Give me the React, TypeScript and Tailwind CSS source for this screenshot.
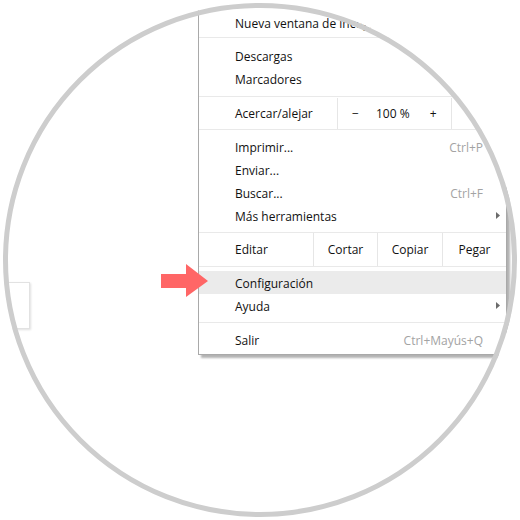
import React from "react";

const font = { fontFamily: '"Segoe UI", "Open Sans", "Noto Sans", sans-serif' };

function Row({ label, shortcut, sub, active }: { label: string; shortcut?: string; sub?: boolean; active?: boolean }) {
  return (
    <div className={`relative flex h-[23px] items-center pl-[36px] pr-[23px] ${active ? "bg-[#ebebeb]" : ""}`}>
      <span className="relative top-[1px] flex-1 text-[12px] text-[#111]">{label}</span>
      {shortcut && <span className="relative top-[1px] text-[12px] text-[#a3a3a3]">{shortcut}</span>}
      {sub && (
        <svg className="absolute left-[297px] top-[8px]" width="4" height="7" viewBox="0 0 4 7">
          <polygon points="0,0 4,3.5 0,7" fill="#6b6b6b" />
        </svg>
      )}
    </div>
  );
}

function Sep() {
  return <div className="h-px bg-[#e9e9e9]" />;
}

export default function App() {
  return (
    <div className="relative h-[520px] w-[520px] overflow-hidden bg-white" style={font}>
      {/* page element behind menu */}
      <div className="absolute left-0 top-[282px] h-[47px] w-[30px] border border-[#e2e2e2] bg-white shadow-[1px_1px_2px_rgba(0,0,0,0.12)]" />
      <div className="absolute left-[512px] top-[238px] h-[28px] w-px bg-[#3b9be0]" />

      {/* Chrome menu */}
      <div className="absolute left-[198px] top-0 w-[309px] border-x border-b border-[#a9a9a9] bg-white shadow-[3px_3px_2px_rgba(0,0,0,0.3)]">
        <div className="pb-[3px] pt-[11px]">
          <Row label="Nueva ventana de incógnito" shortcut="Ctrl+Mayús+N" />
        </div>
        <Sep />
        <div className="py-[6px]">
          <Row label="Descargas" shortcut="Ctrl+J" />
          <Row label="Marcadores" sub />
        </div>
        <Sep />
        <div className="flex h-[32px] pt-[1px] text-[12px] text-[#111]">
          <div className="flex w-[138px] items-center pl-[36px]">Acercar/alejar</div>
          <div className="flex w-[115px] items-center border-x border-[#e6e6e6]">
            <span className="ml-[14px] w-[6px] text-center">−</span>
            <span className="ml-[18px]">100 %</span>
            <span className="ml-[20px]">+</span>
          </div>
          <div className="flex-1" />
        </div>
        <Sep />
        <div className="py-[5px]">
          <Row label="Imprimir..." shortcut="Ctrl+P" />
          <Row label="Enviar..." />
          <Row label="Buscar..." shortcut="Ctrl+F" />
          <Row label="Más herramientas" sub />
        </div>
        <Sep />
        <div className="flex h-[33px] text-[12px] text-[#111]">
          <div className="flex w-[114px] items-center pl-[36px] pt-[1px]">Editar</div>
          <div className="flex w-[64px] items-center justify-center border-l border-[#e6e6e6] pt-[1px]">Cortar</div>
          <div className="flex w-[65px] items-center justify-center border-l border-[#e6e6e6] pt-[1px]">Copiar</div>
          <div className="flex flex-1 items-center justify-center border-l border-[#e6e6e6] pt-[1px]">Pegar</div>
        </div>
        <Sep />
        <div className="pb-[5px] pt-[4px]">
          <Row label="Configuración" active />
          <Row label="Ayuda" sub />
        </div>
        <Sep />
        <div className="pb-[3px] pt-[5px]">
          <Row label="Salir" shortcut="Ctrl+Mayús+Q" />
        </div>
      </div>

      {/* red arrow */}
      <svg className="absolute left-0 top-0" width="520" height="520" viewBox="0 0 520 520">
        <polygon points="161,274 186,274 186,264 208,281 186,297 186,288 161,288" fill="#ff6666" />
      </svg>

      {/* circular frame */}
      <div className="pointer-events-none absolute left-[3px] top-[3px] h-[514px] w-[514px] rounded-full border-[5px] border-[#cdcdcd] shadow-[0_0_0_300px_white]" />
    </div>
  );
}
